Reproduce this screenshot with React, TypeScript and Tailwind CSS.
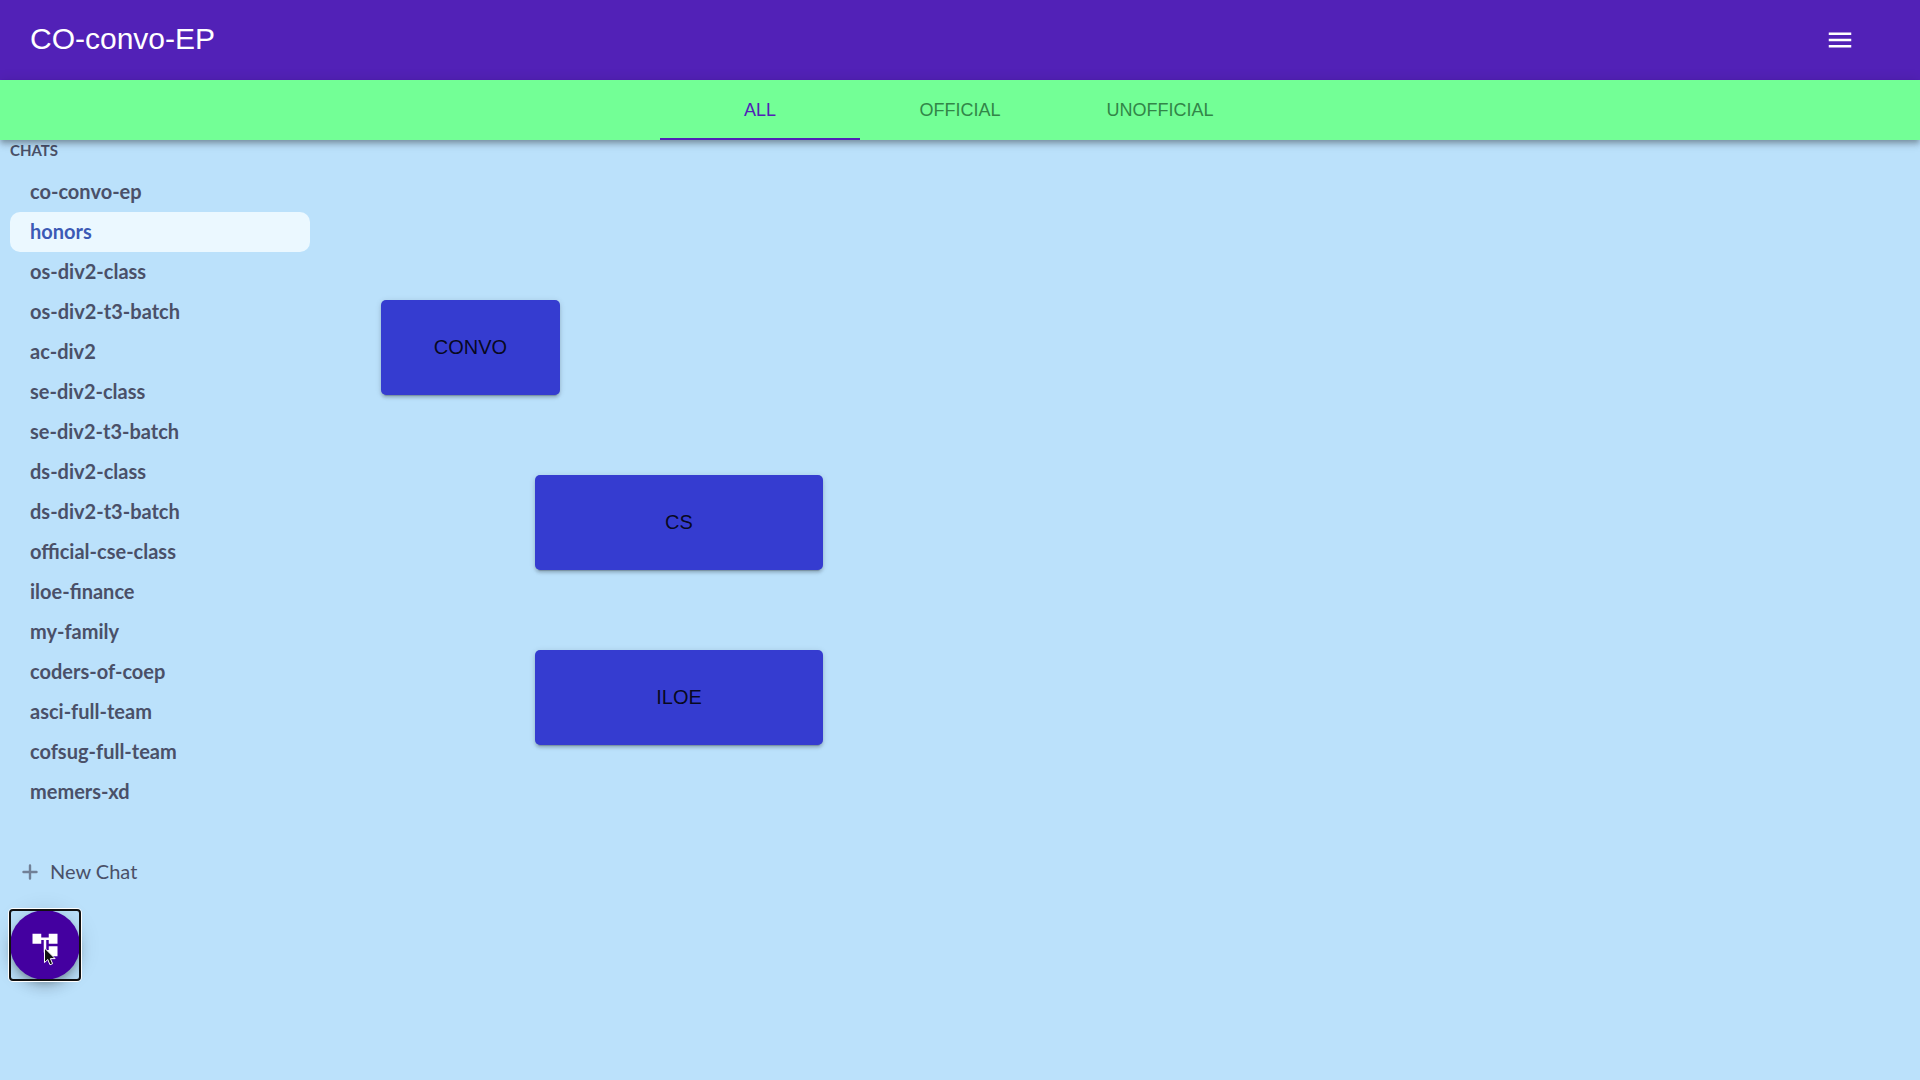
import { MdAccountTree, MdMenu } from "react-icons/md";

const chats = [
  "co-convo-ep",
  "honors",
  "os-div2-class",
  "os-div2-t3-batch",
  "ac-div2",
  "se-div2-class",
  "se-div2-t3-batch",
  "ds-div2-class",
  "ds-div2-t3-batch",
  "official-cse-class",
  "iloe-finance",
  "my-family",
  "coders-of-coep",
  "asci-full-team",
  "cofsug-full-team",
  "memers-xd",
];

const tabs = ["ALL", "OFFICIAL", "UNOFFICIAL"];

const barShadow =
  "shadow-[0_3px_5px_-1px_rgba(0,0,0,0.2),0_5px_6px_0_rgba(0,0,0,0.14),0_1px_13px_0_rgba(0,0,0,0.12)]";

function Header() {
  return (
    <header className="flex h-20 items-center justify-between bg-[#5221b7] pr-[65px] pl-[30px] text-white">
      <h1 className="pb-0.5 text-[30px] leading-10">CO-convo-EP</h1>
      <button type="button" aria-label="Menu">
        <MdMenu className="size-[30px]" />
      </button>
    </header>
  );
}

function TabBar() {
  return (
    <nav
      role="tablist"
      className={`relative flex h-[60px] justify-center bg-[#73ff96] ${barShadow}`}
    >
      {tabs.map((tab, i) => (
        <button
          key={tab}
          type="button"
          role="tab"
          aria-selected={i === 0}
          className={`w-[200px] border-y-2 border-t-transparent text-lg ${
            i === 0
              ? "border-b-[#5221b7] text-[#5221b7]"
              : "border-b-transparent text-[#328548]"
          }`}
        >
          {tab}
        </button>
      ))}
    </nav>
  );
}

function Sidebar() {
  return (
    <aside className="flex w-[320px] flex-col items-start px-2.5 font-['Lato',sans-serif] text-[#4a5068]">
      <h2 className="text-[15px] leading-5 font-bold">CHATS</h2>
      <ul className="mt-3 w-full">
        {chats.map((chat) => (
          <li key={chat}>
            <a
              href="#"
              className={`block h-10 rounded-[10px] px-5 text-xl leading-[38px] font-bold ${
                chat === "honors" ? "bg-[#ebf8ff] text-[#3c5ab5]" : ""
              }`}
            >
              {chat}
            </a>
          </li>
        ))}
      </ul>
      <button
        type="button"
        className="mt-10 flex h-10 items-center gap-3 pl-3 text-xl"
      >
        <svg viewBox="0 0 16 16" className="size-4 text-[#718096]" aria-hidden="true">
          <path d="M8 1.5v13M1.5 8h13" stroke="currentColor" strokeWidth="2.4" strokeLinecap="round" />
        </svg>
        <span className="pb-0.5">New Chat</span>
      </button>
      <button
        type="button"
        aria-label="Show tree"
        className="relative mt-[18px] flex size-[70px] items-center justify-center rounded-full bg-[#4400a0] text-white shadow-[0_4px_6px_-1px_rgba(0,0,0,0.2),0_8px_13px_0_rgba(0,0,0,0.14),0_1px_23px_0_rgba(0,0,0,0.12)]"
      >
        <MdAccountTree className="size-[30px]" />
        <span className="absolute -inset-px rounded-sm border-2 border-[#101010] ring-1 ring-white" />
        <svg viewBox="0 0 12 19" className="absolute top-[37px] left-[34px] h-[19px] w-3" aria-hidden="true">
          <path
            d="M.5 1v14.6l3.3-3.1 2.2 5.3 2.6-1.1-2.2-5.1h4.7z"
            fill="#111"
            stroke="#fff"
            strokeWidth="1"
          />
        </svg>
      </button>
    </aside>
  );
}

function Node({ label, className }: { label: string; className: string }) {
  return (
    <button
      type="button"
      className={`h-[95px] rounded-[5px] bg-[#353cd0] pb-0.5 text-xl text-black/87 shadow-[0_4px_1px_-3px_rgba(0,0,0,0.2),0_3px_3px_0_rgba(0,0,0,0.14),0_1px_6px_0_rgba(0,0,0,0.12)] ${className}`}
    >
      {label}
    </button>
  );
}

export default function App() {
  return (
    <div className="min-h-screen bg-[#bbe1fb] font-['Liberation_Sans',Arial,sans-serif]">
      <Header />
      <TabBar />
      <div className="flex">
        <Sidebar />
        <main className="flex flex-1 flex-col items-start gap-20 pt-40 pl-[61px]">
          <Node label="CONVO" className="w-[179px]" />
          <Node label="CS" className="ml-[154px] w-[288px]" />
          <Node label="ILOE" className="ml-[154px] w-[288px]" />
        </main>
      </div>
    </div>
  );
}
